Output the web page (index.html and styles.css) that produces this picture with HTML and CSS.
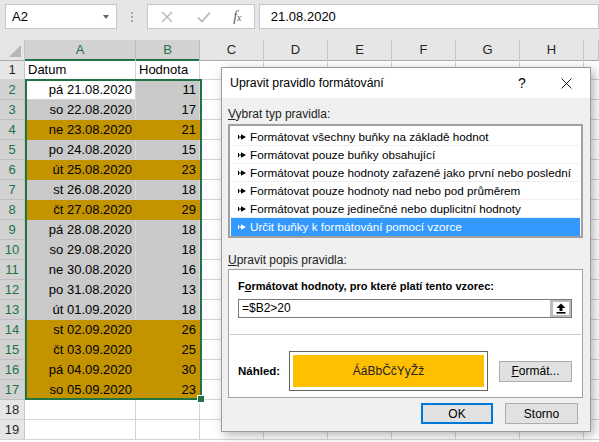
FILE: index.html
```html
<!DOCTYPE html>
<html lang="cs">
<head>
    <meta charset="UTF-8">
    <title>Upravit pravidlo formátování</title>
    <link rel="stylesheet" href="styles.css">
</head>
<body>
    <div class="topbar">
        <div class="namebox">
            <span>A2</span>
            <span class="caret"></span>
        </div>
        <div class="grip"><span></span><span></span><span></span></div>
        <div class="fx-tools">
            <svg class="tool-x" width="12" height="12" viewBox="0 0 12 12"><path d="M1 1 L11 11 M11 1 L1 11" stroke="#b4b4b4" stroke-width="1.3"/></svg>
            <svg class="tool-ok" width="14" height="12" viewBox="0 0 14 12"><path d="M1 6.5 L5 10.5 L13 1.5" stroke="#b4b4b4" stroke-width="1.6" fill="none"/></svg>
            <span class="fx">f<small>x</small></span>
        </div>
        <div class="formula">21.08.2020</div>
    </div>

    <div class="sheet">
        <div class="row head">
            <div class="corner"></div>
            <div class="ch on">A</div>
            <div class="ch on">B</div>
            <div class="ch">C</div>
            <div class="ch">D</div>
            <div class="ch">E</div>
            <div class="ch">F</div>
            <div class="ch">G</div>
            <div class="ch">H</div>
            <div class="ch"></div>
        </div>
        <div class="row"><div class="rh">1</div><div class="c a left">Datum</div><div class="c b left">Hodnota</div><div class="rest"></div></div>
        <div class="row"><div class="rh on">2</div><div class="c a">pá 21.08.2020</div><div class="c b grey">11</div><div class="rest"></div></div>
        <div class="row"><div class="rh on">3</div><div class="c a grey">so 22.08.2020</div><div class="c b grey">17</div><div class="rest"></div></div>
        <div class="row"><div class="rh on">4</div><div class="c a gold">ne 23.08.2020</div><div class="c b gold">21</div><div class="rest"></div></div>
        <div class="row"><div class="rh on">5</div><div class="c a grey">po 24.08.2020</div><div class="c b grey">15</div><div class="rest"></div></div>
        <div class="row"><div class="rh on">6</div><div class="c a gold">út 25.08.2020</div><div class="c b gold">23</div><div class="rest"></div></div>
        <div class="row"><div class="rh on">7</div><div class="c a grey">st 26.08.2020</div><div class="c b grey">18</div><div class="rest"></div></div>
        <div class="row"><div class="rh on">8</div><div class="c a gold">čt 27.08.2020</div><div class="c b gold">29</div><div class="rest"></div></div>
        <div class="row"><div class="rh on">9</div><div class="c a grey">pá 28.08.2020</div><div class="c b grey">18</div><div class="rest"></div></div>
        <div class="row"><div class="rh on">10</div><div class="c a grey">so 29.08.2020</div><div class="c b grey">18</div><div class="rest"></div></div>
        <div class="row"><div class="rh on">11</div><div class="c a grey">ne 30.08.2020</div><div class="c b grey">16</div><div class="rest"></div></div>
        <div class="row"><div class="rh on">12</div><div class="c a grey">po 31.08.2020</div><div class="c b grey">13</div><div class="rest"></div></div>
        <div class="row"><div class="rh on">13</div><div class="c a grey">út 01.09.2020</div><div class="c b grey">18</div><div class="rest"></div></div>
        <div class="row"><div class="rh on">14</div><div class="c a gold">st 02.09.2020</div><div class="c b gold">26</div><div class="rest"></div></div>
        <div class="row"><div class="rh on">15</div><div class="c a gold">čt 03.09.2020</div><div class="c b gold">25</div><div class="rest"></div></div>
        <div class="row"><div class="rh on">16</div><div class="c a gold">pá 04.09.2020</div><div class="c b gold">30</div><div class="rest"></div></div>
        <div class="row"><div class="rh on">17</div><div class="c a gold">so 05.09.2020</div><div class="c b gold">23</div><div class="rest"></div></div>
        <div class="row"><div class="rh">18</div><div class="c a"></div><div class="c b"></div><div class="rest"></div></div>
        <div class="row"><div class="rh">19</div><div class="c a"></div><div class="c b"></div><div class="rest"></div></div>

        <div class="selection"><span class="handle"></span></div>
    </div>

    <div class="dialog">
        <div class="dialog-title">
            <span class="title-text">Upravit pravidlo formátování</span>
            <span class="title-help">?</span>
            <svg class="title-close" width="11" height="11" viewBox="0 0 11 11"><path d="M0.5 0.5 L10.5 10.5 M10.5 0.5 L0.5 10.5" stroke="#222" stroke-width="1"/></svg>
        </div>
        <div class="dialog-body">
            <div class="label"><u>V</u>ybrat typ pravidla:</div>
            <div class="rule-list">
                <div class="rule"><svg class="arrow" width="8" height="6" viewBox="0 0 8 6"><rect x="0" y="1" width="1" height="4"/><rect x="0" y="2.5" width="4" height="1"/><path d="M3 0.3 L8 3 L3 5.7Z"/></svg>Formátovat všechny buňky na základě hodnot</div>
                <div class="rule"><svg class="arrow" width="8" height="6" viewBox="0 0 8 6"><rect x="0" y="1" width="1" height="4"/><rect x="0" y="2.5" width="4" height="1"/><path d="M3 0.3 L8 3 L3 5.7Z"/></svg>Formátovat pouze buňky obsahující</div>
                <div class="rule"><svg class="arrow" width="8" height="6" viewBox="0 0 8 6"><rect x="0" y="1" width="1" height="4"/><rect x="0" y="2.5" width="4" height="1"/><path d="M3 0.3 L8 3 L3 5.7Z"/></svg>Formátovat pouze hodnoty zařazené jako první nebo poslední</div>
                <div class="rule"><svg class="arrow" width="8" height="6" viewBox="0 0 8 6"><rect x="0" y="1" width="1" height="4"/><rect x="0" y="2.5" width="4" height="1"/><path d="M3 0.3 L8 3 L3 5.7Z"/></svg>Formátovat pouze hodnoty nad nebo pod průměrem</div>
                <div class="rule"><svg class="arrow" width="8" height="6" viewBox="0 0 8 6"><rect x="0" y="1" width="1" height="4"/><rect x="0" y="2.5" width="4" height="1"/><path d="M3 0.3 L8 3 L3 5.7Z"/></svg>Formátovat pouze jedinečné nebo duplicitní hodnoty</div>
                <div class="rule selected"><svg class="arrow" width="8" height="6" viewBox="0 0 8 6"><rect x="0" y="1" width="1" height="4"/><rect x="0" y="2.5" width="4" height="1"/><path d="M3 0.3 L8 3 L3 5.7Z"/></svg>Určit buňky k formátování pomocí vzorce</div>
            </div>

            <div class="label second"><u>U</u>pravit popis pravidla:</div>
            <div class="desc">
                <div class="desc-top">
                    <div class="desc-caption">F<u>o</u>rmátovat hodnoty, pro které platí tento vzorec:</div>
                    <div class="rule-input">
                        <span class="rule-formula">=$B2&gt;20</span>
                        <span class="pick">
                            <svg width="10" height="11" viewBox="0 0 10 11"><path d="M5 0.5 L9.5 5 L6.5 5 L6.5 8 L3.5 8 L3.5 5 L0.5 5Z" fill="#000"/><rect x="0.5" y="9" width="9" height="1.6" fill="#000"/></svg>
                        </span>
                    </div>
                </div>
                <div class="desc-line"></div>
                <div class="preview-row">
                    <span class="preview-label">Náhled:</span>
                    <div class="preview"><div class="preview-fill">ÁáBbČčYyŽž</div></div>
                    <button class="btn format" type="button"><u>F</u>ormát...</button>
                </div>
            </div>

            <div class="buttons">
                <button class="btn ok" type="button">OK</button>
                <button class="btn" type="button">Storno</button>
            </div>
        </div>
    </div>
</body>
</html>
```

FILE: styles.css
```css
body {
    margin: 0;
    width: 599px;
    height: 442px;
    overflow: hidden;
    position: relative;
    background-color: #fff;
    font-family: "Liberation Sans", Arial, sans-serif;
    color: #000;
}

/* formula bar */
.topbar {
    height: 40px;
    box-sizing: border-box;
    padding: 4px 0 0 5px;
    display: flex;
    align-items: flex-start;
    background-color: #e6e6e6;
}
.namebox {
    width: 113px;
    height: 25px;
    box-sizing: border-box;
    padding: 0 7px 0 6px;
    display: flex;
    align-items: center;
    justify-content: space-between;
    background-color: #fff;
    border: 1px solid #c6c6c6;
    font-size: 13px;
}
.caret {
    width: 0;
    height: 0;
    border-left: 3.5px solid transparent;
    border-right: 3.5px solid transparent;
    border-top: 4px solid #666;
}
.grip {
    width: 31px;
    height: 25px;
    display: flex;
    flex-direction: column;
    align-items: center;
    justify-content: center;
    gap: 2px;
}
.grip span {
    width: 2px;
    height: 2px;
    background-color: #a6a6a6;
}
.fx-tools {
    width: 109px;
    height: 25px;
    box-sizing: border-box;
    display: flex;
    align-items: center;
    padding-left: 13px;
    background-color: #fff;
    border: 1px solid #c6c6c6;
}
.tool-ok {
    margin-left: 24px;
}
.fx {
    margin-left: 22px;
    font-family: "Liberation Serif", "Times New Roman", serif;
    font-style: italic;
    font-size: 14px;
    color: #5a5a5a;
}
.fx small {
    font-size: 10px;
}
.formula {
    width: 345px;
    height: 25px;
    box-sizing: border-box;
    margin-left: 4px;
    padding-left: 11px;
    line-height: 23px;
    background-color: #fff;
    border: 1px solid #c6c6c6;
    font-size: 13px;
}

/* grid */
.sheet {
    position: relative;
}
.row {
    display: grid;
    grid-template-columns: 25px 111px 64px 1fr;
    height: 20px;
    font-size: 13px;
    line-height: 19px;
}
.row.head {
    grid-template-columns: 25px 111px 64px 64px 64px 64px 64px 64px 64px 1fr;
}
.corner {
    position: relative;
    background-color: #e6e6e6;
    border-right: 1px solid #c6c6c6;
    border-bottom: 1px solid #ababab;
}
.corner::after {
    content: "";
    position: absolute;
    right: 3px;
    bottom: 3px;
    border-left: 12px solid transparent;
    border-bottom: 12px solid #b7b7b7;
}
.ch {
    background-color: #e6e6e6;
    border-right: 1px solid #c6c6c6;
    border-bottom: 1px solid #ababab;
    text-align: center;
    color: #262626;
}
.ch.on {
    background-color: #d2d2d2;
    color: #217346;
    border-bottom: 2px solid #217346;
    border-right-color: #bdbdbd;
}
.rh {
    background-color: #e6e6e6;
    border-right: 1px solid #c6c6c6;
    border-bottom: 1px solid #d4d4d4;
    text-align: center;
    color: #262626;
}
.rh.on {
    background-color: #d2d2d2;
    color: #217346;
    border-bottom-color: #bdbdbd;
}
.c {
    padding: 0 3px;
    text-align: right;
    border-right: 1px solid #d4d4d4;
    border-bottom: 1px solid #d4d4d4;
    white-space: nowrap;
}
.c.left {
    text-align: left;
}
.c.grey {
    background-color: #c9c9c9;
    border-bottom-color: #c9c9c9;
    border-right-color: #d9d9d9;
}
.c.gold {
    background-color: #c49400;
    border-bottom-color: #c49400;
    border-right-color: #c49400;
}
.rest {
    background: repeating-linear-gradient(to right, transparent 0 63px, #d4d4d4 63px 64px);
    border-bottom: 1px solid #d4d4d4;
}
.selection {
    position: absolute;
    left: 25px;
    top: 39px;
    width: 177px;
    height: 321px;
    box-sizing: border-box;
    border: 2px solid #217346;
}
.handle {
    position: absolute;
    right: -5px;
    bottom: -5px;
    width: 6px;
    height: 6px;
    background-color: #217346;
    border: 1px solid #fff;
}

/* dialog */
.dialog {
    position: absolute;
    left: 221px;
    top: 67px;
    width: 370px;
    height: 365px;
    box-sizing: border-box;
    border: 1px solid #9a9a9a;
    background-color: #f0f0f0;
    box-shadow: 3px 3px 10px rgba(0, 0, 0, 0.3);
    font-size: 12px;
}
.dialog-title {
    height: 30px;
    display: flex;
    align-items: center;
    padding-left: 8px;
    background-color: #fff;
}
.title-text {
    flex: 1;
    font-size: 12.3px;
}
.title-help {
    width: 12px;
    font-size: 14px;
    text-align: center;
    margin-right: 33px;
}
.title-close {
    margin-right: 18px;
}
.dialog-body {
    padding: 8px 7px 0 6px;
}
.label {
    height: 16px;
    line-height: 16px;
    margin-bottom: 2px;
    color: #222;
}
.label.second {
    margin-top: 14px;
    margin-bottom: 1px;
}
.rule-list {
    height: 114px;
    box-sizing: border-box;
    padding: 2px 1px 0;
    background-color: #fff;
    border: 2px solid #a0a0a0;
}
.rule {
    height: 18px;
    box-sizing: border-box;
    padding-left: 7px;
    display: flex;
    align-items: center;
    border-bottom: 1px solid #f0f0f0;
    white-space: nowrap;
    font-size: 11.7px;
}
.rule .arrow {
    margin-right: 4px;
    fill: #000;
}
.rule.selected {
    background-color: #3399ff;
    color: #fff;
    border-bottom-color: #3399ff;
}
.rule.selected .arrow {
    fill: #fff;
}
.desc {
    height: 129px;
    box-sizing: border-box;
    background-color: #fff;
    border: 1px solid #a0a0a0;
}
.desc-top {
    padding: 8px 10px 0 9px;
}
.desc-caption {
    height: 16px;
    line-height: 16px;
    font-weight: bold;
    font-size: 11px;
    white-space: nowrap;
}
.rule-input {
    height: 19px;
    box-sizing: border-box;
    margin-top: 5px;
    display: flex;
    border: 1px solid #7a7a7a;
}
.rule-formula {
    flex: 1;
    padding-left: 3px;
    line-height: 17px;
}
.pick {
    width: 21px;
    box-sizing: border-box;
    display: flex;
    align-items: center;
    justify-content: center;
    border: 2px solid #bcbcbc;
    border-left-width: 3px;
    background-color: #fff;
}
.desc-line {
    height: 1px;
    margin: 16px 1px 0;
    background-color: #c8c8c8;
}
.preview-row {
    display: flex;
    align-items: center;
    padding: 16px 0 0 9px;
}
.preview-label {
    width: 51px;
    font-weight: bold;
    font-size: 11.5px;
}
.preview {
    width: 199px;
    height: 40px;
    box-sizing: border-box;
    padding: 3px;
    border: 1px solid #646464;
    background-color: #fff;
}
.preview-fill {
    height: 100%;
    background-color: #ffc000;
    text-align: center;
    line-height: 32px;
    font-size: 12px;
    color: #222;
}
.btn {
    height: 21px;
    width: 73px;
    padding: 0;
    box-sizing: border-box;
    background-color: #e1e1e1;
    border: 1px solid #adadad;
    font-family: "Liberation Sans", Arial, sans-serif;
    font-size: 12px;
    color: #000;
}
.btn.format {
    margin-left: 11px;
}
.buttons {
    display: flex;
    justify-content: flex-end;
    gap: 12px;
    margin-top: 5px;
    padding-right: 5px;
}
.btn.ok {
    width: 72px;
    border: 2px solid #0078d7;
}
```
